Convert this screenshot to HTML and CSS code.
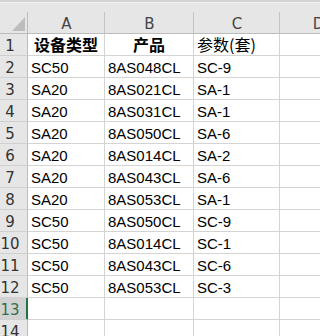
FILE: index.html
```html
<!DOCTYPE html>
<html lang="zh-CN">
<head>
  <meta charset="UTF-8" />
  <title>Sheet1</title>
  <link rel="stylesheet" href="styles.css">
</head>
<body>
  <div class="sheet">
    <div class="topbar"></div>
    <div class="grid">
      <!-- column headers -->
      <div class="corner">
        <svg width="13" height="14" viewBox="0 0 13 14"><polygon points="13,0 13,14 0,14" fill="#bdbdbd"/></svg>
      </div>
      <div class="colhead">A</div>
      <div class="colhead">B</div>
      <div class="colhead">C</div>
      <div class="colhead">D</div>

      <div class="rowhead">1</div>
      <div class="cell title center">设备类型</div>
      <div class="cell title center">产品</div>
      <div class="cell title plain">参数(套)</div>
      <div class="cell"></div>

      <div class="rowhead">2</div>
      <div class="cell">SC50</div>
      <div class="cell">8AS048CL</div>
      <div class="cell">SC-9</div>
      <div class="cell"></div>

      <div class="rowhead">3</div>
      <div class="cell">SA20</div>
      <div class="cell">8AS021CL</div>
      <div class="cell">SA-1</div>
      <div class="cell"></div>

      <div class="rowhead">4</div>
      <div class="cell">SA20</div>
      <div class="cell">8AS031CL</div>
      <div class="cell">SA-1</div>
      <div class="cell"></div>

      <div class="rowhead">5</div>
      <div class="cell">SA20</div>
      <div class="cell">8AS050CL</div>
      <div class="cell">SA-6</div>
      <div class="cell"></div>

      <div class="rowhead">6</div>
      <div class="cell">SA20</div>
      <div class="cell">8AS014CL</div>
      <div class="cell">SA-2</div>
      <div class="cell"></div>

      <div class="rowhead">7</div>
      <div class="cell">SA20</div>
      <div class="cell">8AS043CL</div>
      <div class="cell">SA-6</div>
      <div class="cell"></div>

      <div class="rowhead">8</div>
      <div class="cell">SA20</div>
      <div class="cell">8AS053CL</div>
      <div class="cell">SA-1</div>
      <div class="cell"></div>

      <div class="rowhead">9</div>
      <div class="cell">SC50</div>
      <div class="cell">8AS050CL</div>
      <div class="cell">SC-9</div>
      <div class="cell"></div>

      <div class="rowhead">10</div>
      <div class="cell">SC50</div>
      <div class="cell">8AS014CL</div>
      <div class="cell">SC-1</div>
      <div class="cell"></div>

      <div class="rowhead">11</div>
      <div class="cell">SC50</div>
      <div class="cell">8AS043CL</div>
      <div class="cell">SC-6</div>
      <div class="cell"></div>

      <div class="rowhead">12</div>
      <div class="cell">SC50</div>
      <div class="cell">8AS053CL</div>
      <div class="cell">SC-3</div>
      <div class="cell"></div>

      <div class="rowhead active">13</div>
      <div class="cell"></div>
      <div class="cell"></div>
      <div class="cell"></div>
      <div class="cell"></div>

      <div class="rowhead">14</div>
      <div class="cell"></div>
      <div class="cell"></div>
      <div class="cell"></div>
      <div class="cell"></div>
    </div>
  </div>
</body>
</html>
```

FILE: styles.css
```css
body {
  margin: 0;
  background: #fff;
  overflow: hidden;
}

.sheet {
  width: 320px;
  overflow: hidden;
  font-family: "Liberation Sans", Arial, sans-serif;
  color: #000;
}

.topbar {
  height: 2px;
  background: #d4d4d4;
  border-bottom: 1px solid #f3f3f3;
}

.grid {
  display: grid;
  grid-template-columns: 28px 77px 89px 86px 77px;
  grid-template-rows: 31px;
  grid-auto-rows: 22px;
}

.grid > div {
  box-sizing: border-box;
  white-space: nowrap;
  overflow: hidden;
}

.corner {
  display: flex;
  align-items: flex-end;
  justify-content: flex-end;
  padding: 0 3px 2px 0;
  background: #e6e6e6 linear-gradient(#bcbcbc, #bcbcbc) right bottom / 1px 21px no-repeat;
  border-bottom: 1px solid #bcbcbc;
}

.colhead {
  background: #e6e6e6 linear-gradient(#c4c4c4, #c4c4c4) right bottom / 1px 21px no-repeat;
  border-bottom: 1px solid #bcbcbc;
  font-family: "DejaVu Sans", sans-serif;
  font-size: 15px;
  color: #444;
  text-align: center;
  padding-top: 12px;
  line-height: 18px;
}

.rowhead {
  background: #e6e6e6;
  border-right: 1px solid #bcbcbc;
  border-bottom: 1px solid #d0d0d0;
  font-family: "DejaVu Sans", sans-serif;
  font-size: 15px;
  color: #333;
  text-align: center;
  padding-right: 7px;
  padding-top: 4px;
  line-height: 17px;
}

.rowhead.active {
  background: #d2d2d2;
  color: #2f6f4c;
  border-right-color: #217346;
  box-shadow: inset -1px 0 #217346;
}

.cell {
  border-right: 1px solid #d4d4d4;
  border-bottom: 1px solid #d4d4d4;
  font-size: 15px;
  padding: 3px 0 0 3px;
  line-height: 18px;
}

.grid > .cell.title {
  font-family: "Noto Sans CJK SC", sans-serif;
  font-size: 16px;
  font-weight: bold;
  padding-top: 0;
  line-height: 20px;
  overflow: visible;
}

.grid > .cell.plain {
  font-weight: normal;
}

.cell.center {
  text-align: center;
  padding-left: 0;
}
```
